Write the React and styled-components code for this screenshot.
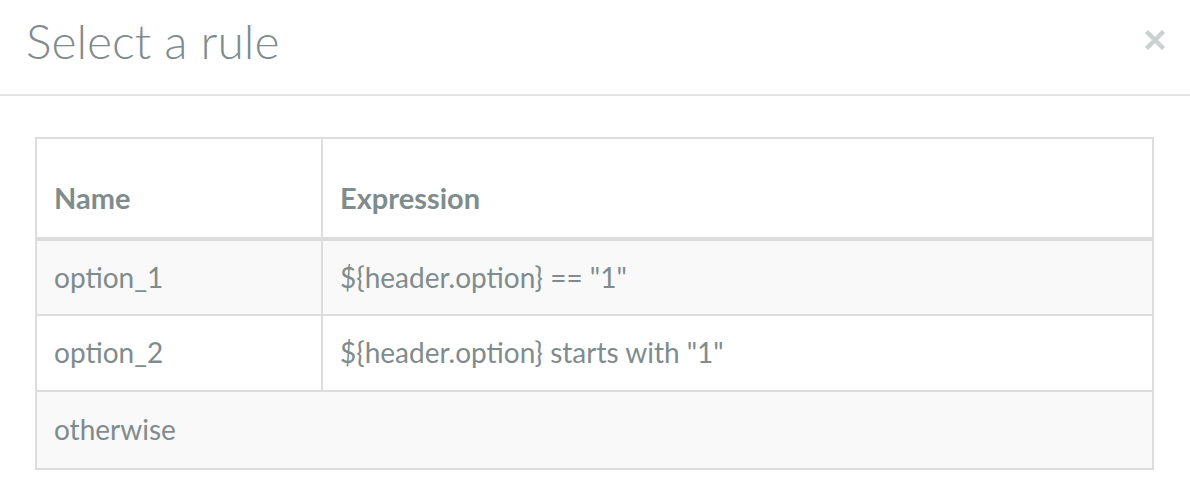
import React from "react";
import styled, { createGlobalStyle } from "styled-components";

const Global = createGlobalStyle`
  html, body {
    margin: 0;
    padding: 0;
    background: #fff;
  }
  body {
    font-family: Lato, "Noto Sans", sans-serif;
    color: #7f8c8d;
  }
`;

const Modal = styled.div`
  width: 1190px;
  height: 496px;
  background: #fff;
  overflow: hidden;
`;

const Header = styled.div`
  height: 94px;
  border-bottom: 2px solid #e5e5e5;
  display: flex;
  align-items: center;
  justify-content: space-between;
  padding: 0 24px 0 26px;
  box-sizing: content-box;
`;

const Title = styled.h4`
  margin: 0;
  font-size: 48px;
  font-weight: 300;
  color: #7f8c8d;
  line-height: 1;
  padding-bottom: 12px;
`;

const Close = styled.button`
  border: 0;
  background: none;
  padding: 0;
  margin-bottom: 14px;
  cursor: pointer;
  display: flex;
`;

const Body = styled.div`
  padding: 41px 36px 0 35px;
`;

const Table = styled.table`
  width: 100%;
  border-collapse: collapse;
  border: 2px solid #ddd;
`;

const Th = styled.th`
  text-align: left;
  vertical-align: bottom;
  height: 101px;
  padding: 0 16px 22px 17px;
  box-sizing: border-box;
  font-size: 29px;
  font-weight: 700;
  color: #7f8c8d;
  border: 2px solid #ddd;
  border-bottom-width: 4px;
  width: ${(p) => p.$width || "auto"};
`;

const Row = styled.tr`
  background: ${(p) => (p.$striped ? "#f9f9f9" : "#fff")};
`;

const Td = styled.td`
  height: ${(p) => (p.$last ? "78px" : "76px")};
  padding: 0 16px 2px 17px;
  box-sizing: border-box;
  font-size: 28px;
  color: #7f8c8d;
  border: 2px solid #ddd;
  vertical-align: middle;
`;

const rules = [
  { name: "option_1", expression: '${header.option} == "1"' },
  { name: "option_2", expression: '${header.option} starts with "1"' },
];

export default function App() {
  return (
    <Modal>
      <Global />
      <Header>
        <Title>Select a rule</Title>
        <Close aria-label="Close">
          <svg width="22" height="22" viewBox="0 0 22 22">
            <path
              d="M2.5 2.5 L19.5 19.5 M19.5 2.5 L2.5 19.5"
              stroke="#cbd0d0"
              strokeWidth="4.5"
              strokeLinecap="butt"
            />
          </svg>
        </Close>
      </Header>
      <Body>
        <Table>
          <thead>
            <tr>
              <Th $width="286px">Name</Th>
              <Th>Expression</Th>
            </tr>
          </thead>
          <tbody>
            {rules.map((r, i) => (
              <Row key={r.name} $striped={i % 2 === 0}>
                <Td>{r.name}</Td>
                <Td>{r.expression}</Td>
              </Row>
            ))}
            <Row $striped>
              <Td colSpan={2} $last>
                otherwise
              </Td>
            </Row>
          </tbody>
        </Table>
      </Body>
    </Modal>
  );
}
